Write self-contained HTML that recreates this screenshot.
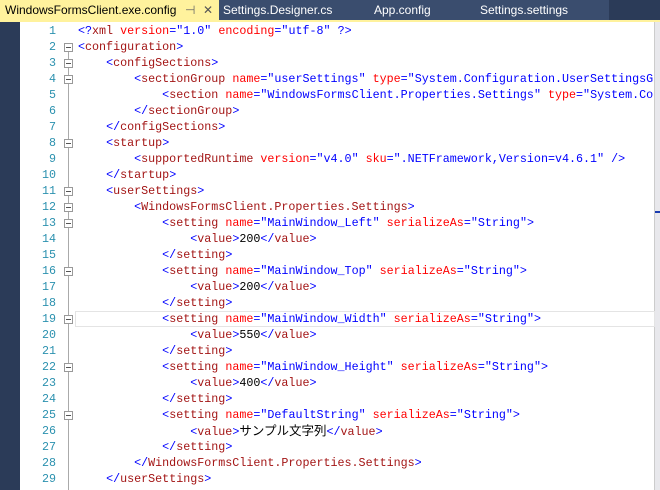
<!DOCTYPE html>
<html><head><meta charset="utf-8"><style>
body{margin:0;width:660px;height:490px;overflow:hidden;background:#fff;font-family:"Liberation Sans",sans-serif;position:relative}
#bar{position:absolute;left:0;top:0;width:660px;height:20px;background:#2b3b58}
#bar2{position:absolute;left:219px;top:0;width:390px;height:20px;background:#3a4d6e}
#stripe{position:absolute;left:0;top:20px;width:660px;height:2px;background:#fff29d}
.tab{position:absolute;top:0;height:20px;line-height:20px;font-size:12px;color:#fff}
#act{left:0;width:219px;background:#fff29d;color:#000;padding-left:5px;box-sizing:border-box}
#left{position:absolute;left:0;top:22px;width:20px;height:468px;background:#2b3b58}
#scroll{position:absolute;left:654px;top:22px;width:6px;height:468px;background:#e8e8ec;border-left:1px solid #ccc}
.ln{position:absolute;left:20px;width:36px;text-align:right;color:#2b91af}
.line{position:absolute;height:16px;line-height:16px;font-family:"Liberation Mono","Noto Sans CJK JP",monospace;font-size:11.7px;white-space:pre}
.code{left:78px}
.t{color:#0000ff}.e{color:#a31515}.a{color:#ff0000}.v{color:#0000ff}
.j{font-family:"Noto Sans CJK JP",sans-serif;font-size:12.5px;line-height:14px}
.fold{position:absolute;left:64px;width:7px;height:7px;border:1px solid #999;background:#fff}
.fold:after{content:"";position:absolute;left:1px;top:3px;width:5px;height:1px;background:#555}
#vl{position:absolute;left:68px;top:48px;width:1px;height:442px;background:#aaa}
#cur{position:absolute;left:75px;top:311px;width:578px;height:14px;border:1px solid #e4e4e4}
#clip{position:absolute;left:0;top:22px;width:654px;height:468px;overflow:hidden}
#code{position:absolute;left:0;top:-22px;width:654px;height:490px}
</style></head><body>
<div id="bar"></div><div id="bar2"></div><div id="stripe"></div>
<div class="tab" id="act">WindowsFormsClient.exe.config<span style="position:absolute;left:185px;color:#666">⊣</span><span style="position:absolute;left:203px;color:#555">✕</span></div>
<div class="tab" style="left:223px">Settings.Designer.cs</div>
<div class="tab" style="left:374px">App.config</div>
<div class="tab" style="left:480px">Settings.settings</div>
<div id="left"></div>
<div id="scroll"></div>
<div style="position:absolute;left:655px;top:211px;width:5px;height:2px;background:#1a3cb0"></div>
<div id="vl"></div>
<div id="cur"></div>
<div id="clip"><div id="code"></div></div>
<script>
var L=[
'<t><?</t><e>xml</e> <a>version</a><t>="</t><v>1.0</v><t>"</t> <a>encoding</a><t>="</t><v>utf-8</v><t>"</t> <t>?></t>',
'<t><</t><e>configuration</e><t>></t>',
'    <t><</t><e>configSections</e><t>></t>',
'        <t><</t><e>sectionGroup</e> <a>name</a><t>="</t><v>userSettings</v><t>"</t> <a>type</a><t>="</t><v>System.Configuration.UserSettingsGroup</v>',
'            <t><</t><e>section</e> <a>name</a><t>="</t><v>WindowsFormsClient.Properties.Settings</v><t>"</t> <a>type</a><t>="</t><v>System.Configuration</v>',
'        <t></</t><e>sectionGroup</e><t>></t>',
'    <t></</t><e>configSections</e><t>></t>',
'    <t><</t><e>startup</e><t>></t>',
'        <t><</t><e>supportedRuntime</e> <a>version</a><t>="</t><v>v4.0</v><t>"</t> <a>sku</a><t>="</t><v>.NETFramework,Version=v4.6.1</v><t>"</t> <t>/></t>',
'    <t></</t><e>startup</e><t>></t>',
'    <t><</t><e>userSettings</e><t>></t>',
'        <t><</t><e>WindowsFormsClient.Properties.Settings</e><t>></t>',
'            <t><</t><e>setting</e> <a>name</a><t>="</t><v>MainWindow_Left</v><t>"</t> <a>serializeAs</a><t>="</t><v>String</v><t>"></t>',
'                <t><</t><e>value</e><t>></t>200<t></</t><e>value</e><t>></t>',
'            <t></</t><e>setting</e><t>></t>',
'            <t><</t><e>setting</e> <a>name</a><t>="</t><v>MainWindow_Top</v><t>"</t> <a>serializeAs</a><t>="</t><v>String</v><t>"></t>',
'                <t><</t><e>value</e><t>></t>200<t></</t><e>value</e><t>></t>',
'            <t></</t><e>setting</e><t>></t>',
'            <t><</t><e>setting</e> <a>name</a><t>="</t><v>MainWindow_Width</v><t>"</t> <a>serializeAs</a><t>="</t><v>String</v><t>"></t>',
'                <t><</t><e>value</e><t>></t>550<t></</t><e>value</e><t>></t>',
'            <t></</t><e>setting</e><t>></t>',
'            <t><</t><e>setting</e> <a>name</a><t>="</t><v>MainWindow_Height</v><t>"</t> <a>serializeAs</a><t>="</t><v>String</v><t>"></t>',
'                <t><</t><e>value</e><t>></t>400<t></</t><e>value</e><t>></t>',
'            <t></</t><e>setting</e><t>></t>',
'            <t><</t><e>setting</e> <a>name</a><t>="</t><v>DefaultString</v><t>"</t> <a>serializeAs</a><t>="</t><v>String</v><t>"></t>',
'                <t><</t><e>value</e><t>></t><j>サンプル文字列</j><t></</t><e>value</e><t>></t>',
'            <t></</t><e>setting</e><t>></t>',
'        <t></</t><e>WindowsFormsClient.Properties.Settings</e><t>></t>',
'    <t></</t><e>userSettings</e><t>></t>'];
var folds=[2,3,4,8,11,12,13,16,19,22,25];
var h='';
for(var i=0;i<L.length;i++){
 var y=23+i*16;
 var s=L[i].replace(/<(\/?)([teavj])>/g,function(m,c,k){return c?'</span>':'<span class="'+k+'">';});
 s=s.replace(/<(?!\/?span)/g,'&lt;').replace(/(^|[^"a-z])>/g,function(m,p){return p+'&gt;';});
 h+='<div class="line ln" style="top:'+y+'px">'+(i+1)+'</div>';
 h+='<div class="line code" style="top:'+y+'px">'+s+'</div>';
 if(folds.indexOf(i+1)>=0)h+='<div class="fold" style="top:'+(y+4)+'px"></div>';
}
document.getElementById('code').innerHTML=h;
</script>
</body></html>
